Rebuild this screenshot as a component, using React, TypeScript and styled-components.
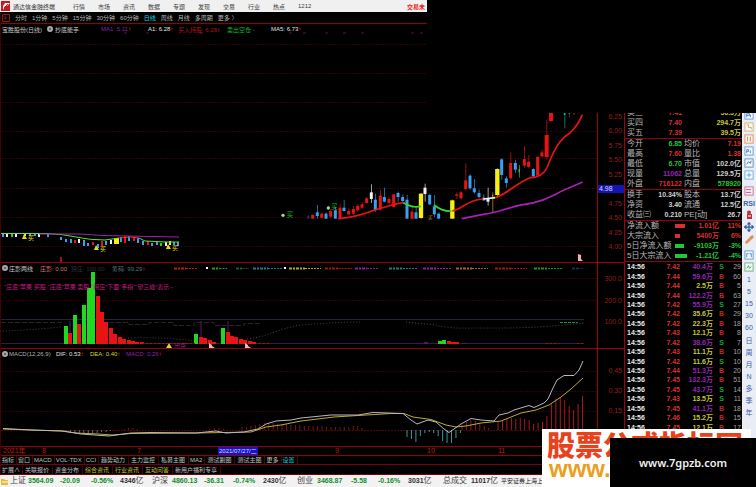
import React from "react";
import styled, { createGlobalStyle } from "styled-components";
import { Move, Pencil } from "lucide-react";

const latin = `"Liberation Sans", "Noto Sans CJK SC", sans-serif`;

const GlobalStyle = createGlobalStyle`
  * { box-sizing: border-box; }
  body { margin: 0; background: #000; font-family: ${latin}; }
  button { font: inherit; color: inherit; background: none; border: 0; padding: 0; margin: 0; white-space: nowrap; cursor: pointer; }
  svg { display: block; }
`;

const Page = styled.div`
  position: relative;
  min-height: 100vh;
  display: grid;
  grid-template-rows: 12px 1fr 12px;
  overflow: hidden;
  background: #000;
  color: #c8c8c8;
  font-size: 6px;
`;

const MenuBar = styled.header`
  display: grid;
  grid-template-columns: 11px 62px repeat(10, 25px) 84px auto;
  align-items: center;
  justify-content: start;
  background: #f0f0f0;
  color: #404040;
  white-space: nowrap;
  button { text-align: left; }
`;

const Brand = styled.span`
  color: #303030;
  padding-left: 2px;
`;

const AlertButton = styled.button`
  grid-column: 14;
  && { color: #e82020; font-weight: bold; }
`;

const Body = styled.main`
  display: grid;
  grid-template-columns: minmax(0, 1fr) 28px 117px 14px;
`;

const Charts = styled.section`
  display: grid;
  grid-template-rows: 12px 239px 86px 98px 9px 9px 1fr;
  border-left: 1px solid #400;
`;

const Periods = styled.nav`
  display: flex;
  align-items: center;
  gap: 5px;
  padding-left: 1px;
  border-bottom: 1px solid #900010;
`;

const Period = styled.button<{ $active?: boolean }>`
  && { color: ${(p) => (p.$active ? "#10d8e8" : "#b8b8b8")}; }
`;

const Panel = styled.div`
  display: grid;
  min-height: 0;
  border-bottom: 1px solid #900010;
  > * { grid-area: 1 / 1; }
  > svg { width: 100%; height: 100%; }
`;

const Legend = styled.div<{ $cols: string }>`
  display: grid;
  grid-template-columns: ${(p) => p.$cols};
  align-items: center;
  align-self: start;
  height: 10px;
  padding-left: 1px;
  white-space: nowrap;
  z-index: 1;
`;

const Tone = styled.span<{ $c: string }>`
  color: ${(p) => p.$c};
  i { color: #f03030; font-style: normal; font-weight: bold; }
`;

const Knob = styled.span`
  width: 6px;
  height: 6px;
  border-radius: 50%;
  border: 2px solid #a8a8a8;
  background: #484848;
`;

const Dates = styled.div`
  display: grid;
  grid-template-columns: 39fr 95fr 81fr 117fr 92fr 71fr 99fr;
  align-items: center;
  justify-items: start;
  padding-left: 2px;
  color: #c01818;
  font-size: 7px;
  line-height: 8px;
  border-bottom: 1px solid #900010;
`;

const CurrentDate = styled.span`
  background: #1414c8;
  color: #dcdcff;
  font-size: 6px;
  padding: 0 1px;
`;

const Tabs = styled.nav`
  display: flex;
  align-items: center;
  border-bottom: 1px solid #780010;
`;

const Tab = styled.button<{ $c?: string; $wide?: boolean }>`
  && {
    padding: 0 ${(p) => (p.$wide ? 3 : 2)}px 0 ${(p) => (p.$wide ? 2 : 1)}px;
    line-height: 8px;
    color: ${(p) => p.$c ?? "#c0c0c0"};
    border-right: 1px solid #500;
  }
`;

const Axis = styled.aside`
  display: grid;
  grid-template-rows: 100px 151px 86px 98px 1fr;
  border-left: 1px solid #a00010;
  border-right: 1px solid #a00010;
  color: #981c1c;
  font-size: 7px;
`;

const Scale = styled.div<{ $top: number; $bottom: number }>`
  display: flex;
  flex-direction: column;
  justify-content: space-between;
  padding: ${(p) => p.$top}px 2px ${(p) => p.$bottom}px 0;
  text-align: right;
  line-height: 8px;
  border-bottom: 1px solid #a00010;
`;

const PriceTag = styled.span`
  background: #1414b4;
  color: #d8d8ff;
  text-align: left;
  padding-left: 1px;
  margin-right: -2px;
`;

const Quotes = styled.aside`
  padding-top: 96px;
  font-size: 7px;
  min-width: 0;
`;

const QuoteTable = styled.table`
  display: block;
  border-bottom: 1px solid #900010;
  tbody { display: block; }
`;

const QuoteRow = styled.tr<{ $cols: string }>`
  display: grid;
  grid-template-columns: ${(p) => p.$cols};
  align-items: center;
  height: 10px;
  padding: 0 1px 0 2px;
  white-space: nowrap;
  line-height: 10px;
`;

const Label = styled.th<{ $inset?: boolean }>`
  padding: 0 0 0 ${(p) => (p.$inset ? 2 : 0)}px;
  text-align: left;
  font-size: 8px;
  font-weight: normal;
  color: #b8b8b8;
`;

const Value = styled.td<{ $c: string }>`
  padding: 0;
  text-align: right;
  font-weight: bold;
  color: ${(p) => p.$c};
`;

const FlowBar = styled.td<{ $c: string; $w: number }>`
  padding: 0;
  width: ${(p) => p.$w}px;
  height: 4px;
  background: ${(p) => p.$c};
`;

const Ticks = styled.table`
  width: 100%;
  height: 170px;
  table-layout: fixed;
  border-collapse: collapse;
  line-height: 9px;
  td { padding: 0 1px 0 0; text-align: right; font-weight: bold; }
  td:first-child { padding-left: 2px; text-align: left; color: #e8e8e8; }
  td:last-child { font-weight: normal; }
`;

const TickCell = styled.td<{ $c: string }>`
  color: ${(p) => p.$c};
`;

const ToolRail = styled.nav`
  padding-top: 97px;
  background: #e9edf5;
  color: #3a62a8;
  font-size: 7px;
`;

const Tool = styled.button<{ $gap?: number; $bold?: boolean }>`
  && {
    display: grid;
    place-items: center;
    width: 100%;
    height: 12px;
    margin-top: ${(p) => p.$gap ?? 0}px;
    font-weight: ${(p) => (p.$bold ? "bold" : "normal")};
  }
`;

const Status = styled.footer`
  display: grid;
  grid-template-columns: 10px 18px 32px 31px 29px 32px 20px 32px 29px 30px 34px 20px 34px 27px 30px 35px 28px 30px auto;
  justify-content: start;
  align-items: center;
  background: #f2f2f2;
  color: #404040;
  white-space: nowrap;
  font-size: 8px;
  line-height: 12px;
  overflow: hidden;
`;

const StatusValue = styled.span<{ $down?: boolean }>`
  font-size: 7px;
  font-weight: bold;
  color: ${(p) => (p.$down ? "#148c28" : "#303030")};
`;

const Broker = styled.span`
  font-size: 6px;
  color: #181818;
`;

const TopMask = styled.div`
  position: absolute;
  top: 0;
  right: 0;
  width: 329px;
  height: 113px;
  background: #000;
  z-index: 2;
`;

const Watermark = styled.div`
  position: absolute;
  right: 5px;
  bottom: 0;
  width: 209px;
  height: 58px;
  padding-left: 5px;
  background: #fff;
  overflow: hidden;
  white-space: nowrap;
  font-family: "Noto Sans CJK SC", sans-serif;
  font-weight: 900;
  font-size: 28px;
  line-height: 30px;
  color: #e8421c;
  z-index: 3;
`;

const WatermarkUrl = styled.div`
  font-family: "Liberation Sans", sans-serif;
  font-weight: bold;
  font-size: 24px;
  line-height: 20px;
  padding-left: 2px;
  color: #eaa01c;
`;

const SiteBox = styled.div`
  position: absolute;
  right: 0;
  bottom: 0;
  width: 146px;
  height: 49px;
  display: grid;
  place-items: center;
  background: #000;
  color: #f0f0f0;
  font-family: "Noto Sans", sans-serif;
  font-weight: 600;
  font-size: 11px;
  z-index: 4;
`;

const RED = "#e81414";
const BLUE = "#3ca0f0";
const YEL = "#f8f010";
const WHITE = "#f0f0f0";
const GREEN = "#1fd81f";

/* x, wick top, body top, body bottom, wick bottom, colour, body width */
type Candle = [number, number, number, number, number, string, number?];

const candles: Candle[] = [
  [115, 330, 333, 341, 341, "#183c60", 6],
  [128, 328, 330, 341, 341, RED], [142, 300, 322, 333, 341, BLUE], [155, 322, 326, 338, 341, RED],
  [168, 322, 326, 341, 341, BLUE], [182, 312, 318, 335, 341, RED], [196, 305, 316, 341, 341, BLUE],
  [210, 298, 308, 341, 341, RED], [222, 285, 308, 318, 320, BLUE], [236, 310, 318, 328, 330, RED],
  [250, 303, 312, 326, 328, RED], [263, 296, 303, 316, 320, RED], [276, 292, 298, 308, 312, RED],
  [290, 276, 280, 294, 296, RED], [304, 238, 262, 282, 294, WHITE], [316, 266, 284, 316, 320, BLUE],
  [331, 256, 272, 314, 318, RED], [343, 248, 276, 290, 292, BLUE], [357, 276, 282, 294, 298, RED],
  [371, 266, 268, 306, 308, RED], [384, 260, 264, 276, 290, BLUE], [398, 268, 276, 288, 296, BLUE],
  [411, 270, 284, 341, 341, BLUE], [426, 300, 320, 341, 341, RED], [438, 308, 322, 341, 341, BLUE],
  [453, 264, 266, 339, 341, YEL, 13], [465, 236, 248, 267, 290, WHITE], [479, 266, 270, 298, 300, BLUE],
  [493, 270, 304, 328, 336, BLUE], [506, 322, 326, 341, 341, BLUE], [547, 284, 286, 341, 341, YEL, 13],
  [560, 262, 268, 272, 282, RED], [573, 258, 262, 280, 284, RED], [587, 175, 226, 252, 256, RED],
  [600, 208, 212, 250, 254, BLUE], [613, 222, 250, 262, 266, BLUE], [627, 254, 264, 276, 280, BLUE],
  [641, 268, 278, 286, 288, BLUE], [654, 248, 282, 290, 302, WHITE], [668, 262, 270, 274, 322, "#e0a020", 3],
  [682, 190, 192, 270, 274, YEL, 13], [695, 160, 163, 210, 224, BLUE], [709, 214, 220, 234, 248, BLUE],
  [722, 142, 174, 220, 224, RED], [736, 164, 174, 194, 204, BLUE], [748, 180, 192, 202, 218, GREEN, 4],
  [763, 124, 162, 182, 188, RED], [776, 150, 170, 186, 190, RED], [790, 190, 192, 214, 220, BLUE],
  [803, 152, 156, 212, 214, RED], [816, 134, 142, 154, 158, RED], [830, 44, 90, 156, 164, RED, 12],
  [843, 24, 24, 48, 50, RED, 12], [884, 24, 24, 30, 70, "#20a090", 5], [898, 24, 24, 27, 36, "#286080", 5],
  [912, 24, 24, 27, 30, "#a01010", 5],
];

const leftCandles: [number, number, number, string][] = [
  [2, 234, 3, BLUE], [6, 234, 3, WHITE], [11, 234, 3, GREEN], [15, 234, 3, WHITE], [24, 233, 3, YEL],
  [29, 233, 3, BLUE], [34, 233, 3, BLUE], [38, 234, 3, WHITE], [47, 234, 3, BLUE], [60, 237, 3, BLUE],
  [65, 239, 3, BLUE], [70, 239, 4, BLUE], [74, 240, 3, RED], [78, 239, 4, WHITE], [83, 240, 6, BLUE],
  [87, 243, 3, BLUE], [92, 242, 3, RED], [97, 244, 4, BLUE], [101, 241, 5, RED], [105, 241, 4, BLUE],
  [110, 240, 4, WHITE], [114, 238, 6, YEL], [120, 237, 5, BLUE], [124, 236, 7, RED], [128, 236, 5, BLUE],
  [133, 237, 4, RED], [137, 238, 5, BLUE], [142, 241, 4, BLUE], [147, 241, 4, RED], [151, 243, 3, BLUE],
  [156, 242, 3, BLUE], [160, 243, 3, GREEN], [165, 242, 4, WHITE], [169, 241, 4, YEL], [173, 242, 3, BLUE],
  [177, 242, 4, BLUE],
];

const volumes: [number, number, string][] = [
  [65, 326, GREEN], [69, 333, RED], [74, 315, GREEN], [78, 324, RED], [83, 305, GREEN], [88, 288, GREEN],
  [92, 272, GREEN], [97, 296, RED], [101, 312, RED], [105, 322, RED], [110, 328, RED], [114, 334, RED],
  [119, 337, RED], [123, 339, RED], [128, 340, RED], [132, 341, RED], [136, 342, RED], [141, 342, RED],
  [195, 334, GREEN], [200, 337, RED], [204, 338, RED], [209, 340, RED], [213, 342, RED], [222, 328, GREEN],
  [227, 332, RED], [231, 336, RED], [235, 337, RED], [240, 339, RED], [244, 340, RED], [249, 341, RED],
  [253, 342, RED], [258, 343, "#801010"], [439, 341, GREEN], [443, 340, GREEN], [448, 341, RED],
  [452, 342, RED], [456, 342, RED], [425, 342, "#601070"], [463, 343, "#601060"],
];

const positive = [3, 3, 4, 5, 6, 7, 7, 7, 6, 6, 6, 5, 5, 5, 4, 4, 4, 4, 4, 3, 3, 3, 3, 3, 3, 4, 4, 2];
const negative = [7, 9, 12, 6, 3, 2, 3, 6, 11, 13, 13, 8, 3];
const rising = [5, 8, 10, 9, 7, 4, 2];
const latest = [8, 9, 11, 12, 11, 12, 11, 10, 6, 7, 8, 14, 26, 31, 33, 30, 24, 20, 26, 34];

const Grid = ({ ys }: { ys: number[] }) => (
  <g stroke="#2c0408" strokeWidth="1">
    {ys.map((y) => <path key={y} d={`M0 ${y}.5H596`} strokeDasharray="2 1" />)}
  </g>
);

const BuyMark = ({ x, y }: { x: number; y: number }) => (
  <g fill="#e8d818">
    <path d={`M${x} ${y - 5}l3 5h-5z`} />
    <text x={x + 4} y={y + 1} fontSize="6">买</text>
  </g>
);

const Tag = ({ x, y }: { x: number; y: number }) => <path d={`M${x} ${y}v-5l3 2v1l3 2z`} fill="#f0b8a8" />;

function PriceChart() {
  return (
    <svg viewBox="0 24 596 238" preserveAspectRatio="none" role="img" aria-label="日线">
      <Grid ys={[44, 73, 102, 131, 158, 188, 217, 246]} />
      {[34, 124, 146, 200, 289, 303, 325, 343, 361, 411, 420].map((x) => (
        <path key={x} d={`M${x - 1} 33h3`} stroke="#580c60" />
      ))}
      {leftCandles.map(([x, y, h, c]) => <rect key={x} x={x - 1} y={y} width={c === YEL && h > 5 ? 5 : 2} height={h} fill={c} />)}
      <g fill="none" strokeWidth="1">
        <path d="M0 233.5H45Q62 234 75 237Q88 240 104 240L118 238" stroke="#50e830" />
        <path d="M118 238L130 237L138 238" stroke="#f03020" />
        <path d="M138 238L144 241L165 242H178" stroke="#50e830" />
        <path d="M38 234L80 234Q100 236 125 236L178 237" stroke="#a020b0" />
      </g>
      <BuyMark x={23} y={239} />
      <BuyMark x={95} y={250} />
      <BuyMark x={167} y={249} />
      <path d="M60 257v5" stroke="#a01010" strokeWidth="2" />
      <g transform="translate(269 105) scale(.3333)">
        {candles.map(([x, wt, t, b, wb, c, w = 9]) => (
          <g key={x} fill={c}>
            <rect x={x - 1} y={wt} width="3" height={wb - wt} opacity=".65" />
            <rect x={x - w / 2} y={t} width={w} height={b - t} />
          </g>
        ))}
        <g fill="none" strokeWidth="5">
          <path d="M205 341C250 337 280 328 306 318C335 308 350 306 371 298L400 293" stroke={RED} />
          <path d="M400 293C420 304 430 308 453 304M492 300C510 314 525 320 545 318" stroke="#30d830" />
          <path d="M547 318C575 314 595 282 640 282" stroke={RED} />
          <path d="M640 282L676 278" stroke={WHITE} />
          <path d="M676 278C710 268 730 240 780 218Q818 218 832 186C850 140 865 105 900 84Q925 60 937 29" stroke={RED} />
          <path d="M575 341L640 328C680 325 715 306 760 299C830 290 860 262 895 250L938 231" stroke="#a820b8" />
        </g>
        <g fill="#20b020">
          <circle cx="39" cy="331" r="5" fill="#a0e080" /><text x="50" y="337" fontSize="19">买</text>
          <circle cx="175" cy="309" r="5" fill="#a0e080" /><text x="184" y="311" fontSize="19">买</text>
          <text x="474" y="341" fontSize="14" fill="#b0a020">买</text>
        </g>
      </g>
      <path d="M577 261v-7l3 1v4l2 2z" fill="#f0b0a8" />
    </svg>
  );
}

const fragments: [number, number, string][] = [
  [173, 24, "#c01818"], [211, 15, "#20a030"], [235, 13, "#205828"], [252, 30, "#207888"], [288, 32, "#b0a820"],
  [324, 27, "#a01818"], [354, 24, "#8020a0"], [388, 28, "#207878"], [422, 28, "#882098"], [455, 32, "#986828"],
  [494, 32, "#a01818"], [533, 28, "#109830"], [571, 12, "#203048"],
];

function VolumeChart() {
  return (
    <svg viewBox="0 263 596 85" preserveAspectRatio="none" role="img" aria-label="庄影两线">
      <Grid ys={[278, 300]} />
      {fragments.map(([x, w, c]) => (
        <g key={x} stroke={c}>
          <path d={`M${x} 268.5h${w / 2}`} strokeWidth="2" strokeDasharray="3 1 2 1" />
          <path d={`M${x + w / 2} 268.5h${w / 2}`} strokeDasharray="2 1" />
        </g>
      ))}
      <path d="M205 268h2M283 268h2" stroke="#fff" strokeWidth="2" />
      <g fill="none">
        <path d="M0 319.5H583" stroke="#24243c" />
        <path d="M0 322.5H63M108 322.5h20v2h20v-2h25v3h20v-3h20v3h30v-2h18" stroke="#28242c" strokeDasharray="5 2" />
        <path d="M0 343.5H583" stroke="#38184c" />
        <path d="M2 331Q30 330 60 327M127 338Q165 337 195 341M246 339C270 336 275 329 300 325Q335 322 360 322M405 322L435 325Q450 329 470 328C500 328 530 329 583 323" stroke="#484848" strokeDasharray="1 2" />
        <path d="M559 322.5h18" stroke="#208830" strokeDasharray="3 1" />
        <path d="M69 321v14M200 321v18M227 321v14" stroke="#581868" />
      </g>
      {volumes.map(([x, y, c]) => <rect key={x} x={x - 2} y={y} width="4" height={344 - y} fill={c} />)}
      <path d="M141 343.5h53M258 343.5h12M545 343.5h13M576 343.5h8" stroke="#981818" strokeDasharray="2 2" />
      <text x="3" y="289" fontSize="6" fill="#c41c80">“庄底”苹果 买股·“庄底”苹果 卖股·“拐庄”下面“手指”“望三峰”表示·-</text>
      <path d="M168 343l3 5h-6z" fill="#e8d020" />
      <text x="173" y="348" fontSize="6" fill="#b01890">出货</text>
      <Tag x={208} y={348} />
      <Tag x={244} y={348} />
    </svg>
  );
}

const MacdBars = ({ x, values, color, down }: { x: number; values: number[]; color: string; down?: boolean }) => (
  <g stroke={color}>
    {values.map((v, i) => <path key={i} d={`M${x + i * 4.45} 430v${down ? v : -v}`} />)}
  </g>
);

function MacdChart() {
  return (
    <svg viewBox="0 349 596 97" preserveAspectRatio="none" role="img" aria-label="MACD">
      <Grid ys={[371, 391, 411]} />
      <path d="M0 430.5H583" stroke="#480810" strokeDasharray="2 1" />
      <MacdBars x={241} values={positive} color="#801414" />
      <MacdBars x={65} values={[2, 2, 3, 3, 4, 4, 4, 3, 2, 2, 1]} color="#587068" down />
      <MacdBars x={123} values={[1, 2, 2, 1]} color="#801414" />
      <MacdBars x={209} values={[1, 2, 2, 1]} color="#801414" />
      <MacdBars x={406} values={negative} color="#389898" down />
      <MacdBars x={461} values={rising} color="#901818" />
      <MacdBars x={497} values={latest} color="#a81c1c" />
      <g fill="none" strokeWidth="1">
        <path d="M2 429L60 431L75 433L97 434L112 435L130 433.5L195 433L250 432L265 427L280 425L300 421L333 417L357 415.5L390 413.5H403L412 417L430 419.5L445 425L455 427L465 426L480 423L500 421L520 413L535 410L548 405L560 397L570 389L582 378" stroke="#b8ac30" />
        <path d="M2 428.5L30 430L62 431L80 434L108 436L130 433L150 432.5L195 433L215 431L225 433L243 432L257 429L265 424L275 421L290 420L300 418L330 415L357 415L372 412.5L402 413.5L410 420L416 424L427 420L435 422L443 429L448 432.5L460 424L470 418.5L480 420L493 421L498 415L507 413L513 410L528 405.5L533 407.5L543 403L547 399L552 388L556 380L563 375.5H573L578 370L582 361" stroke="#b8b8c0" />
      </g>
    </svg>
  );
}

const R = "#d83030";
const W = "#d0d0d0";
const P = "#9424b0";
const Y = "#c8c430";
const G = "#20c838";
const quoteCols = "26px 29px 24px 1fr";

const topQuotes = [
  ["买三", "7.41", "56.3万"],
  ["买四", "7.40", "294.7万"],
  ["买五", "7.39", "39.5万"],
];
const dayQuotes = [
  ["今开", "6.85", G, "均价", "7.19", R],
  ["最高", "7.60", R, "量比", "1.38", R],
  ["最低", "6.70", G, "市值", "102.0亿", W],
  ["现量", "11062", P, "总量", "129.5万", W],
  ["外盘", "716122", R, "内盘", "578920", G],
];
const baseQuotes = [
  ["换手", "10.34%", W, "股本", "13.7亿", W],
  ["净资", "3.40", W, "流通", "12.5亿", W],
  ["收益㈢", "0.210", W, "PE[动]", "26.7", W],
];
const flows: [string, number, string, string, string][] = [
  ["净流入额", 10, "1.01亿", "11%", R],
  ["大宗流入", 5, "5400万", "6%", R],
  ["5日净流入额", 9, "-9103万", "-3%", G],
  ["5日大宗流入", 12, "-1.21亿", "-4%", G],
];
const ticks = `7.42 40.4 S 29|7.44 59.6 B 60|7.44 2.5 B 5|7.44 122.2 B 63|7.42 55.9 S 27|7.42 35.6 B 29|7.42 22.3 B 18|7.43 12.1 B 8|7.42 38.6 S 7|7.43 11.1 B 10|7.42 11.6 S 10|7.44 51.3 B 20|7.45 132.3 B 51|7.45 43.7 S 14|7.43 13.5 S 11|7.45 41.1 B 18|7.46 15.2 B 15|7.45 12.1 B 17`
  .split("|")
  .map((r) => r.split(" "));

const PairTable = ({ rows }: { rows: string[][] }) => (
  <QuoteTable>
    <tbody>
      {rows.map(([a, b, c, d, e, f]) => (
        <QuoteRow key={a} $cols={quoteCols}>
          <Label scope="row">{a}</Label><Value $c={c}>{b}</Value>
          <Label scope="row" $inset>{d}</Label><Value $c={f}>{e}</Value>
        </QuoteRow>
      ))}
    </tbody>
  </QuoteTable>
);

const ToolIcon = ({ kind }: { kind: number }) => {
  const c = ["#4888c8", "#d8a848", "#e07830", "#4888c8", "#3878b8", "#58a0d8", "#d04878", "#4888c8", "#48a858"][kind];
  const marks = [
    "M3 8V4h3v2H3M7 8V5", "M3 3h2v3h3v2", "M4 3v5M7 3v5", "M3 8V4h2v2H3M7 5v3", "M3 7l2-3 2 2 1-3",
    "M3 5.5h5M5.5 3v5", "M2 4h6M2 7h6", "M3 8V4h2M6 4h2v4", "M3 7l2-3 1 3 2-2",
  ];
  return (
    <svg width="10" height="10" viewBox="0 0 11 11" fill="none" stroke={c} aria-hidden="true">
      <rect x="1" y="1" width="9" height="9" fill="#f8fcff" opacity=".8" />
      <path d={marks[kind]} strokeWidth="1" />
    </svg>
  );
};

const StopIcon = () => (
  <svg width="9" height="10" viewBox="0 0 9 10" fill="#b83038" aria-hidden="true">
    <circle cx="4" cy="2.5" r="2" /><path d="M2 4h5v5H2z" /><path d="M3 6h3" stroke="#fff" />
  </svg>
);

const statusItems: [string, string, string, string, string][] = [
  ["上证", "3564.09", "-20.09", "-0.56%", "4346"],
  ["沪深", "4860.13", "-36.31", "-0.74%", "2430"],
  ["创业", "3468.87", "-5.58", "-0.16%", "3031"],
];

export default function App() {
  return (
    <Page>
      <GlobalStyle />
      <MenuBar>
        <svg width="11" height="12" viewBox="0 0 11 12" aria-hidden="true">
          <rect x="1" y="1" width="9" height="10" fill="#c81820" />
          <path d="M3 10V6l2-3h5L7 6H5z" fill="#fff" /><path d="M4 8l4-4" stroke="#c81820" />
        </svg>
        <Brand>通达信金融终端</Brand>
        {["行情", "市场", "资讯", "数据", "专题", "发现", "交易", "行业", "热点", "1212"].map((t) => <button key={t}>{t}</button>)}
        <AlertButton>交易未</AlertButton>
      </MenuBar>

      <Body>
        <Charts>
          <Periods>
            <svg width="8" height="8" viewBox="0 0 8 8" fill="none" stroke="#802020" aria-hidden="true">
              <path d="M.5.5h7v7h-7zM3 2v4M3 4h2" />
            </svg>
            {["分时", "1分钟", "5分钟", "15分钟", "30分钟", "60分钟", "日线", "周线", "月线", "多周期", "更多 〉"].map((t) => (
              <Period key={t} $active={t === "日线"}>{t}</Period>
            ))}
          </Periods>
          <Panel>
            <Legend $cols="45px 8px 46px 47px 30px 49px 44px auto">
              <span>宝胜股份(日线)</span>
              <Knob />
              <span>抄底能手</span>
              <Tone $c="#9020a8">MA1: 5.11<i>↑</i></Tone>
              <Tone $c="#e0e0e0">A1: 6.28<i>↑</i></Tone>
              <Tone $c="#b01414">买入持股: 6.28<i>↑</i></Tone>
              <Tone $c="#18b828">卖出空仓 -</Tone>
              <Tone $c="#e0e0e0">MA5: 6.73<i>↑</i></Tone>
            </Legend>
            <PriceChart />
          </Panel>
          <Panel>
            <Legend $cols="7px 31px 31px 41px auto">
              <Knob />
              <span>庄影两线</span>
              <Tone $c="#c87868">庄影: 0.00</Tone>
              <Tone $c="#303438">拐庄: 100.00</Tone>
              <Tone $c="#587078">筹码: 99.29<i>↑</i></Tone>
            </Legend>
            <VolumeChart />
          </Panel>
          <Panel>
            <Legend $cols="7px 47px 34px 36px auto">
              <Knob />
              <Tone $c="#b0b0b0">MACD(12,26,9)</Tone>
              <Tone $c="#e0e0e0">DIF: 0.53<i>↑</i></Tone>
              <Tone $c="#d8d420">DEA: 0.40<i>↑</i></Tone>
              <Tone $c="#9820a8">MACD: 0.26<i>↑</i></Tone>
            </Legend>
            <MacdChart />
          </Panel>
          <Dates>
            <span>2021年</span><span>8</span><span>7</span>
            <CurrentDate>2021/07/27/二</CurrentDate>
            <span>9</span><span>10</span><span>11</span>
          </Dates>
          <Tabs>
            {["指标", "窗口", "MACD", "VOL-TDX", "CCI", "趋势动力", "主力监控", "私募主图", "MA2", "测试副图", "测试主图", "更多", "设置"].map((t) => (
              <Tab key={t} $wide={/^[^A-Z]{4}$/.test(t)} $c={t === "设置" ? "#18c8d0" : undefined}>{t}</Tab>
            ))}
          </Tabs>
          <Tabs>
            <Tab>扩展∧</Tab><Tab $wide>关联报价</Tab><Tab $wide>资金分布</Tab>
            <Tab $wide $c={Y}>综合资讯</Tab><Tab $wide $c={Y}>行业资讯</Tab><Tab $wide $c={Y}>互动问答</Tab>
            <Tab $wide>新用户福利专享</Tab>
          </Tabs>
        </Charts>

        <Axis>
          <span />
          <Scale $top={1} $bottom={11}>
            <span>6.25</span><span>6.00</span><span>5.75</span><span>5.50</span><span>5.25</span>
            <PriceTag>4.98</PriceTag>
            <span>4.75</span><span>4.50</span><span>4.25</span><span>4.00</span>
          </Scale>
          <Scale $top={12} $bottom={22}><span>300.0</span><span>200.0</span><span>100.0</span></Scale>
          <Scale $top={18} $bottom={31}><span>0.45</span><span>0.30</span><span>0.15</span></Scale>
        </Axis>

        <Quotes>
          <QuoteTable>
            <tbody>
              {topQuotes.map(([a, b, c]) => (
                <QuoteRow key={a} $cols="26px 29px 1fr">
                  <Label scope="row">{a}</Label><Value $c={R}>{b}</Value><Value $c={Y}>{c}</Value>
                </QuoteRow>
              ))}
            </tbody>
          </QuoteTable>
          <PairTable rows={dayQuotes} />
          <PairTable rows={baseQuotes} />
          <QuoteTable>
            <tbody>
              {flows.map(([a, w, b, c, color]) => (
                <QuoteRow key={a} $cols="48px 12px 1fr 22px">
                  <Label scope="row">{a}</Label><FlowBar $c={color} $w={w} />
                  <Value $c={color}>{b}</Value><Value $c={color}>{c}</Value>
                </QuoteRow>
              ))}
            </tbody>
          </QuoteTable>
          <Ticks>
            <colgroup><col width="28" /><col width="28" /><col width="33" /><col width="11" /><col /></colgroup>
            <tbody>
              {ticks.map(([p, a, s, n], i) => (
                <tr key={i}>
                  <td>14:56</td>
                  <TickCell $c={R}>{p}</TickCell>
                  <TickCell $c={Number(a) > 36 ? P : Y}>{a}万</TickCell>
                  <TickCell $c={s === "S" ? "#18a030" : "#b82828"}>{s}</TickCell>
                  <TickCell $c="#a0a0a0">{n}</TickCell>
                </tr>
              ))}
            </tbody>
          </Ticks>
        </Quotes>

        <ToolRail>
          {[0, 1, 2, 3, 4, 5].map((k) => <Tool key={k} aria-label={`工具${k + 1}`}><ToolIcon kind={k} /></Tool>)}
          <Tool $gap={4} aria-label="画线"><ToolIcon kind={6} /></Tool>
          <Tool $bold>RSI</Tool>
          <Tool aria-label="停止"><StopIcon /></Tool>
          <Tool aria-label="移动"><Move size={10} color="#2858a8" strokeWidth={3} /></Tool>
          <Tool aria-label="画笔"><Pencil size={9} color="#d07838" fill="#e89850" strokeWidth={2} /></Tool>
          <Tool $gap={4} aria-label="图表"><ToolIcon kind={7} /></Tool>
          <Tool aria-label="叠加"><ToolIcon kind={8} /></Tool>
          {["1", "5", "15", "30", "60"].map((t) => <Tool key={t}>{t}</Tool>)}
          {["日", "周", "月", "N", "多", "季", "年"].map((t, i) => <Tool key={t} $gap={i === 0 ? 1 : 0}>{t}</Tool>)}
        </ToolRail>
      </Body>

      <Status>
        <svg width="9" height="9" viewBox="0 0 9 9" aria-hidden="true">
          <path d="M1 2h3l1 1h3v5H1z" fill="#f0b830" /><path d="M2 4h6v2H2z" fill="#f8dc80" />
        </svg>
        {statusItems.map(([n, v, d, p, t]) => (
          <React.Fragment key={n}>
            <span>{n}</span>
            <StatusValue $down>{v}</StatusValue>
            <StatusValue $down>{d}</StatusValue>
            <StatusValue $down>{p}</StatusValue>
            <span><StatusValue>{t}</StatusValue>亿</span>
          </React.Fragment>
        ))}
        <span>总成交</span>
        <span><StatusValue>11017</StatusValue>亿</span>
        <Broker>平安证券上海上证综合行情</Broker>
      </Status>

      <TopMask />
      <Watermark>
        股票公式指标网
        <WatermarkUrl>www.</WatermarkUrl>
      </Watermark>
      <SiteBox>www.7gpzb.com</SiteBox>
    </Page>
  );
}
